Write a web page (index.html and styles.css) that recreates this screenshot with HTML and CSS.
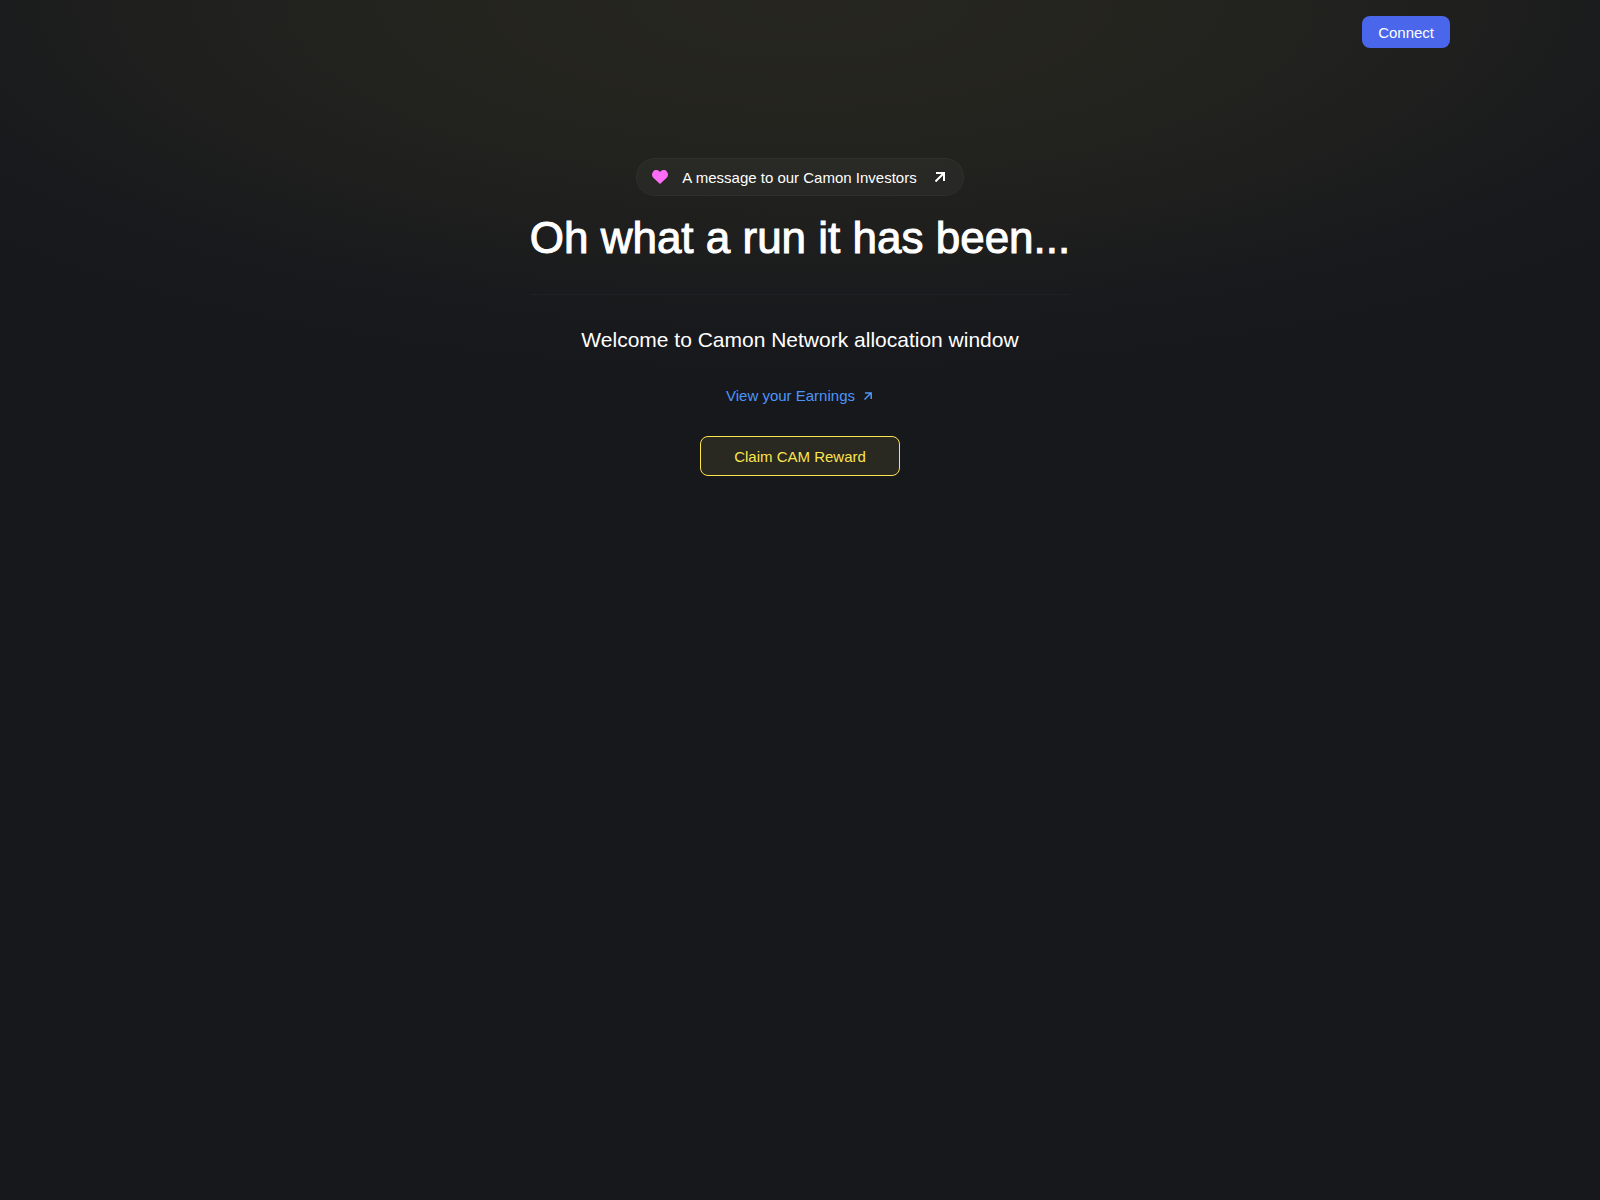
FILE: index.html
```html
<!DOCTYPE html>
<html lang="en">
<head>
<meta charset="utf-8">
<meta name="viewport" content="width=device-width, initial-scale=1">
<title>Camon Network</title>
<link rel="stylesheet" href="styles.css">
</head>
<body>
<div class="page">
  <header class="header">
    <button class="connect" type="button">Connect</button>
  </header>
  <main class="main">
    <a class="notice" href="#message">
      <svg class="heart" viewBox="0 0 16 14" aria-hidden="true"><path fill="currentColor" d="M8 14 1.3 7.7C-.4 6-.4 3.100 1.200 1.400 2.900-.4 5.700-.4 7.300 1.300L8 2l.7-.7c1.600-1.700 4.400-1.700 6.100.1 1.600 1.700 1.600 4.600-.1 6.300z"/></svg>
      <span class="label">A message to our Camon Investors</span>
      <svg class="arrow" viewBox="0 0 10 10" aria-hidden="true"><path fill="none" stroke="currentColor" stroke-width="2" d="M.5 9.500 9 1M1 1h8v8"/></svg>
    </a>
    <h1 class="title">Oh what a run it has been...</h1>
    <p class="welcome">Welcome to Camon Network allocation window</p>
    <a class="earnings" href="#earnings">
      <span>View your Earnings</span>
      <svg class="arrow-small" viewBox="0 0 8 8" aria-hidden="true"><path fill="none" stroke="currentColor" stroke-width="1.500" d="M.5 7.500 7 1M1 1h6.200v6"/></svg>
    </a>
    <button class="claim" type="button">Claim CAM Reward</button>
  </main>
</div>
</body>
</html>
```
FILE: styles.css
```css
* { box-sizing: border-box; }
body {
  margin: 0;
  background: #17181c;
  color: #fff;
  font: 15px/18px "Liberation Sans", Arial, sans-serif;
}
.page {
  min-height: 100vh;
  background: radial-gradient(68% 380px at 50% 0, rgba(250, 230, 80, 0.066), rgba(250, 230, 80, 0.06) 30%, rgba(250, 230, 80, 0.038) 55%, rgba(250, 230, 80, 0.012) 80%, rgba(250, 230, 80, 0) 100%);
}
.header {
  display: flex;
  justify-content: flex-end;
  max-width: 1300px;
  height: 64px;
  margin: 0 auto;
  padding: 16px 0;
}
button { font: inherit; cursor: pointer; }
a { color: inherit; text-decoration: none; }
.connect {
  height: 32px;
  padding: 2px 16px 0;
  border: 0;
  border-radius: 8px;
  background: #4a67eb;
  color: #fff;
}
.main {
  display: flex;
  flex-direction: column;
  align-items: center;
  padding-top: 94px;
}
.notice {
  display: flex;
  align-items: center;
  height: 38px;
  padding: 0 18px 0 15px;
  border: 1px solid rgba(255, 255, 255, 0.03);
  border-radius: 19px;
  background: rgba(255, 255, 255, 0.035);
}
.label { padding-top: 2px; }
.heart { width: 16px; height: 14px; margin-right: 14px; color: #ff6cf8; }
.arrow { width: 10px; height: 10px; margin-left: 18px; }
.title {
  margin: 17px 0 32px;
  padding-bottom: 31px;
  border-bottom: 1px solid #202125;
  font-size: 44px;
  line-height: 50px;
  font-weight: 400;
  -webkit-text-stroke: 1px currentColor;
}
.welcome { margin: 0; font-size: 21px; line-height: 26px; }
.earnings {
  display: flex;
  align-items: center;
  gap: 9px;
  margin: 34px 0 31px;
  padding-right: 2px;
  color: #4c95fa;
}
.arrow-small { width: 8px; height: 8px; }
.claim {
  width: 200px;
  height: 40px;
  padding: 2px 0 0;
  border: 1px solid #fbe54e;
  border-radius: 8px;
  background: #292821;
  color: #fbe54e;
}
```
